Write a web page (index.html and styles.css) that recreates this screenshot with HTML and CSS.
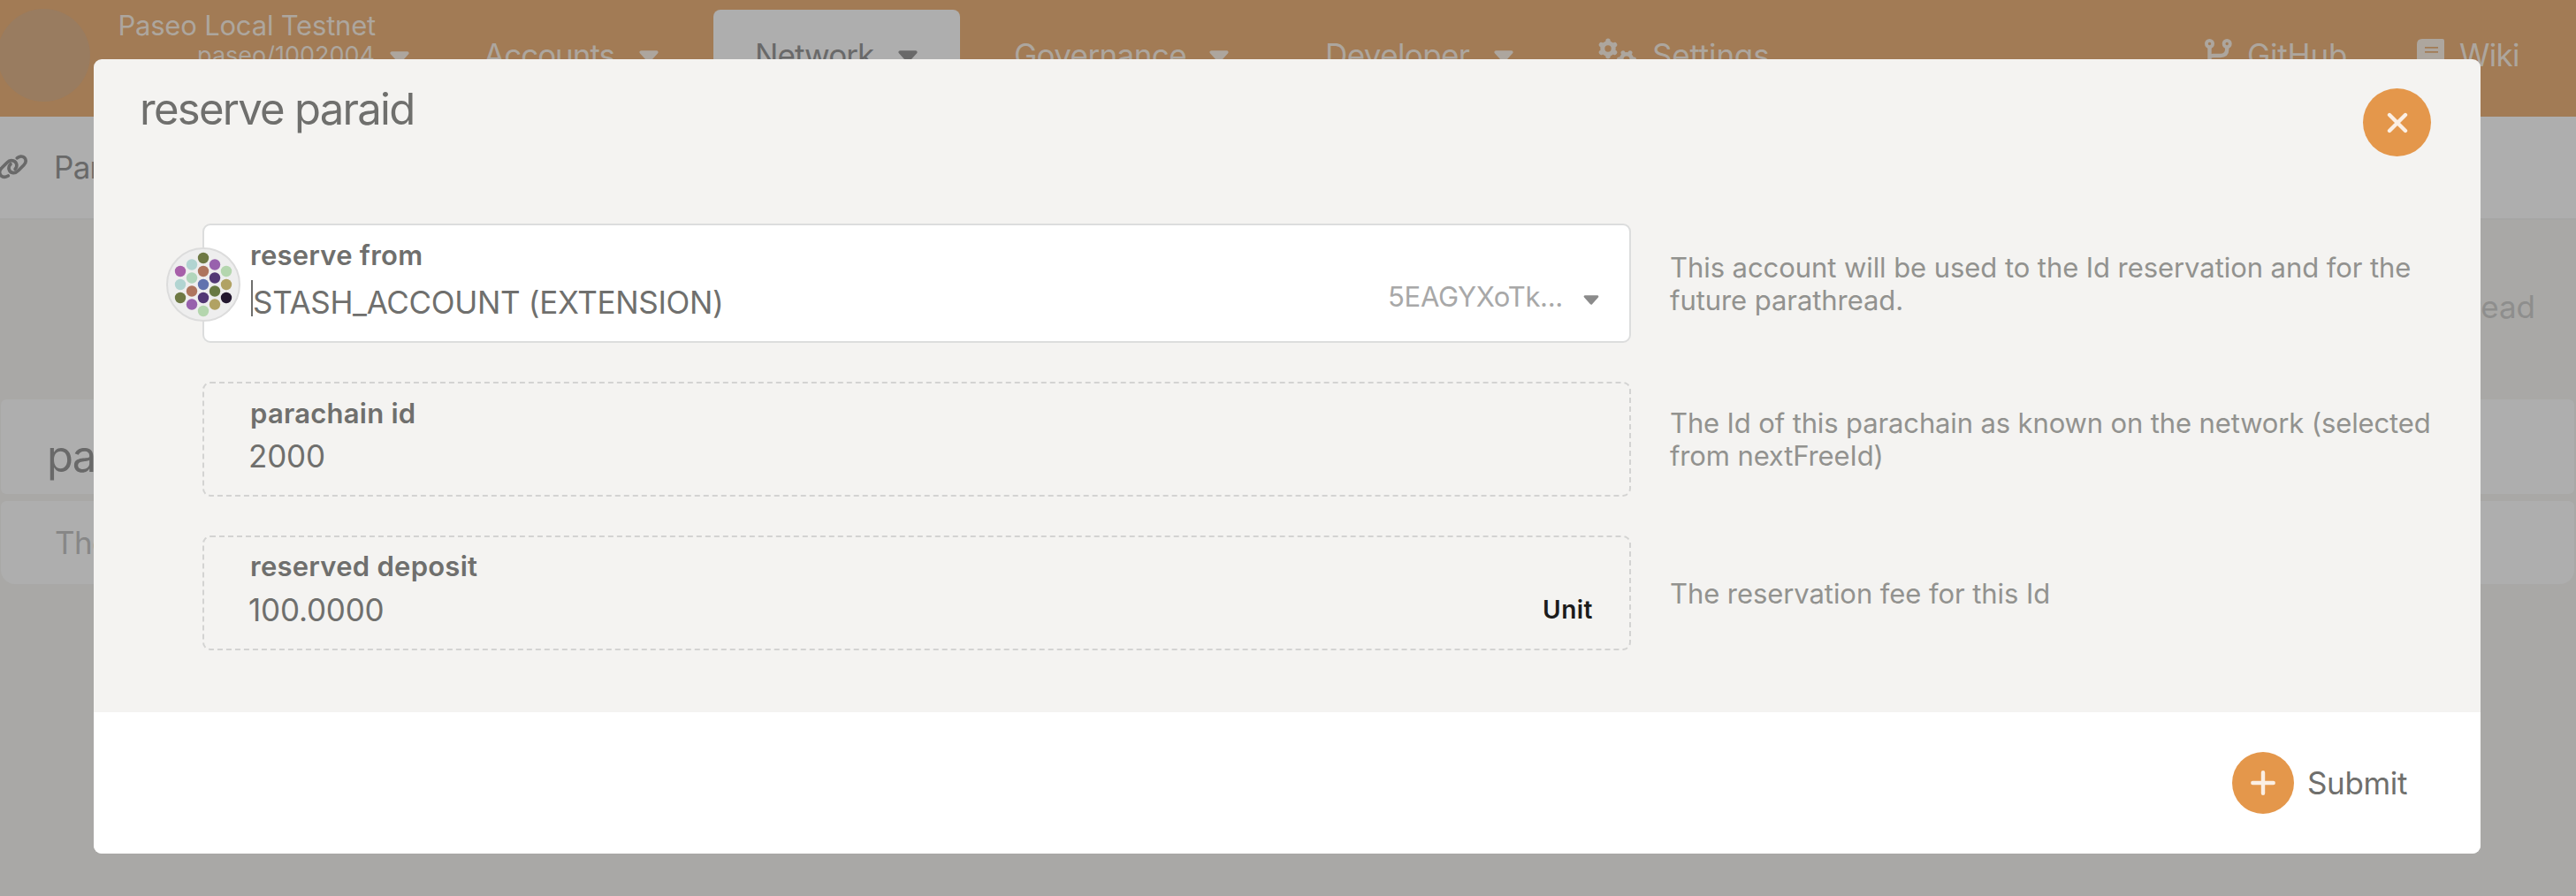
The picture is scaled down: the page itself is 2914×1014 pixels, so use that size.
FILE: index.html
```
<!DOCTYPE html>
<html lang="en">
<head>
<meta charset="utf-8">
<title>Parachains</title>
<link rel="stylesheet" href="styles.css">
</head>
<body>
<svg class="defs" width="0" height="0" aria-hidden="true">
  <symbol id="caret" viewBox="0 0 22 14"><path d="M2.2 2h17.6L11 11.8z" fill="currentColor" stroke="currentColor" stroke-width="3.6" stroke-linejoin="round"/></symbol>
</svg>

<header class="topbar">
  <div class="logo"></div>
  <div class="chain">
    <div class="chain-name">Paseo Local Testnet</div>
    <div class="chain-version">paseo/1002004</div>
  </div>
  <svg class="caret chain-caret"><use href="#caret"/></svg>
  <nav class="menu">
    <a class="menu-item accounts"><span>Accounts</span><svg class="caret"><use href="#caret"/></svg></a>
    <a class="menu-item network active"><span>Network</span><svg class="caret"><use href="#caret"/></svg></a>
    <a class="menu-item governance"><span>Governance</span><svg class="caret"><use href="#caret"/></svg></a>
    <a class="menu-item developer"><span>Developer</span><svg class="caret"><use href="#caret"/></svg></a>
    <a class="menu-link settings">
      <svg width="43" height="38" viewBox="0 0 43 38">
        <g fill="none" stroke="currentColor">
          <circle cx="11" cy="12" r="6.2" stroke-width="5"/>
          <path stroke-width="5.4" stroke-linecap="round" d="M11 3.2v1.5M11 19.300v1.500M3.400 7.600l1.300.8M17.300 15.600l1.300.8M3.400 16.400l1.300-.8M17.300 8.400l1.300-.8"/>
          <circle cx="32" cy="24" r="5.800" stroke-width="4.600"/>
          <path stroke-width="5" stroke-linecap="round" d="M24.300 24h-.8M39.700 24h.8M28 16.800l.5.900M36 16.800l-.5.900M28 31.200l.5-.9M36 31.200l-.5-.9"/>
        </g>
      </svg>
      <span>Settings</span>
    </a>
  </nav>
  <nav class="external">
    <a class="menu-link github">
      <svg width="31" height="36" viewBox="0 0 31 36" fill="none" stroke="currentColor">
        <circle cx="5.500" cy="5.500" r="3.600" stroke-width="3.800"/>
        <circle cx="25.200" cy="5.500" r="3.600" stroke-width="3.800"/>
        <circle cx="5.500" cy="30" r="3.600" stroke-width="3.800"/>
        <path stroke-width="4.400" d="M5.500 10v16M5.500 20.500q1-1.500 4-1.500h8q7.700 0 7.700-7v-2"/>
      </svg>
      <span>GitHub</span>
    </a>
    <a class="menu-link wiki">
      <svg width="31" height="36" viewBox="0 0 31 36">
        <path fill="currentColor" fill-rule="evenodd" d="M6 0h23q2 0 2 2v22q0 1.500-1.500 2v5q1.500.3 1.500 2t-2 2H6q-6 0-6-6V6q0-6 6-6zM9 9v1.700h15V9zM9 14v1.700h15V14zM6 26.500q-2.200 0-2.200 2.200T6 31h20v-4.500z"/>
      </svg>
      <span>Wiki</span>
    </a>
  </nav>
</header>

<div class="tabs">
  <svg class="link-icon" width="33" height="28" viewBox="0 0 33 28" fill="none" stroke="currentColor" stroke-width="3.700" stroke-linecap="round">
    <path d="M12.900 10.800C9.500 14 11 19.500 15 20.400c3 .7 5-.5 7-2.600l6-6c3-3 2.600-6.600.6-8.400-2.400-2.100-5.800-1.600-8.300.5"/>
    <path d="M18.200 16.300c3-3.200 1.700-8-2-9.200-3-1-5.400 0-7.200 1.900l-6 6c-3.200 3-3 6.800-.8 8.900 2.400 2.100 5.300 1.700 8 .1"/>
  </svg>
  <span class="tab">Para</span>
</div>

<main class="page">
  <div class="actions">thread</div>
  <section class="panel panel-head">para</section>
  <section class="panel panel-body">There</section>
</main>

<div class="modal" role="dialog">
  <div class="modal-header">
    <h1 class="modal-title">reserve paraid</h1>
    <button class="round close" aria-label="Close">
      <svg width="24" height="24" viewBox="0 0 24 24"><path d="M3 3l18 18M21 3L3 21" fill="none" stroke="currentColor" stroke-width="4.400" stroke-linecap="round"/></svg>
    </button>
  </div>
  <div class="form">
    <div class="row">
      <div class="field account">
        <svg class="identicon" width="84" height="84" viewBox="-42 -42 84 84">
          <circle r="41" fill="#eee" stroke="#dcdcdc" stroke-width="2"/>
          <circle cx="0" cy="-30" r="6.200" fill="#6e7944"/>
          <circle cx="-13" cy="-22.500" r="6.200" fill="#b1d4d1"/>
          <circle cx="13" cy="-22.500" r="6.200" fill="#9861ad"/>
          <circle cx="-26" cy="-15" r="6.200" fill="#a75fa9"/>
          <circle cx="0" cy="-15" r="6.200" fill="#ae755d"/>
          <circle cx="26" cy="-15" r="6.200" fill="#b4d6ae"/>
          <circle cx="-13" cy="-7.500" r="6.200" fill="#b1d5bb"/>
          <circle cx="13" cy="-7.500" r="6.200" fill="#523874"/>
          <circle cx="-26" cy="0" r="6.200" fill="#b1d4d1"/>
          <circle cx="0" cy="0" r="6.200" fill="#6172ae"/>
          <circle cx="26" cy="0" r="6.200" fill="#b1a263"/>
          <circle cx="-13" cy="7.500" r="6.200" fill="#ae755d"/>
          <circle cx="13" cy="7.500" r="6.200" fill="#687942"/>
          <circle cx="-26" cy="15" r="6.200" fill="#6e7944"/>
          <circle cx="0" cy="15" r="6.200" fill="#523874"/>
          <circle cx="26" cy="15" r="6.200" fill="#23182f"/>
          <circle cx="-13" cy="22.500" r="6.200" fill="#9861ad"/>
          <circle cx="13" cy="22.500" r="6.200" fill="#b1a263"/>
          <circle cx="0" cy="30" r="6.200" fill="#b4d6ae"/>
        </svg>
        <div class="label">reserve from</div>
        <div class="value-row">
          <span class="cursor"></span>
          <span class="value name">STASH_ACCOUNT (EXTENSION)</span>
          <span class="address">5EAGYXoTk...</span>
          <svg class="select-caret"><use href="#caret"/></svg>
        </div>
      </div>
      <p class="help account-help">This account will be used to the Id reservation and for the<br>future parathread.</p>
    </div>
    <div class="row">
      <div class="field static">
        <div class="label">parachain id</div>
        <div class="value-row"><span class="value">2000</span></div>
      </div>
      <p class="help id-help">The Id of this parachain as known on the network (selected<br>from nextFreeId)</p>
    </div>
    <div class="row">
      <div class="field static deposit">
        <div class="label">reserved deposit</div>
        <div class="value-row"><span class="value amount">100.0000</span><span class="unit">Unit</span></div>
      </div>
      <p class="help">The reservation fee for this Id</p>
    </div>
  </div>
  <div class="modal-footer">
    <button class="round submit-icon" aria-label="Submit">
      <svg width="28" height="28" viewBox="0 0 28 28"><path d="M14 2.300v23.400M2.300 14h23.400" fill="none" stroke="currentColor" stroke-width="4.400" stroke-linecap="round"/></svg>
    </button>
    <span class="submit-label">Submit</span>
  </div>
</div>
</body>
</html>
```
FILE: styles.css
```
* { box-sizing: border-box; }

body {
  margin: 0;
  width: 2914px;
  height: 1014px;
  position: relative;
  overflow: hidden;
  background: #a9a8a6;
  font-family: Inter, "Liberation Sans", sans-serif;
  font-size: 35px;
  line-height: 44px;
  color: #6f6f6d;
  white-space: nowrap;
}

svg { display: block; flex: none; }
.defs { position: absolute; }
button { border: 0; padding: 0; font: inherit; }

/* top bar */
.topbar {
  display: flex;
  height: 132px;
  background: #a27b55;
  color: #ada69e;
}

.logo {
  flex: none;
  width: 105px;
  height: 105px;
  margin: 10px 0 0 -3px;
  border-radius: 50%;
  background: #997c60;
}

.chain {
  flex: none;
  width: 323px;
  padding-top: 12px;
  text-align: right;
  line-height: 34px;
}

.chain-name { font-size: 31px; letter-spacing: -0.2px; }
.chain-version { font-size: 27px; padding-right: 1px; }

.caret { width: 22px; height: 14px; }
.chain-caret { margin: 58px 0 0 16px; }

.menu {
  display: flex;
  gap: 14px;
  height: 102px;
  margin: 11px 0 0 40px;
}

.menu-item {
  flex: none;
  display: flex;
  align-items: center;
  justify-content: space-between;
  padding: 0 48px 0 47px;
  border-radius: 8px 8px 0 0;
}

.menu-item .caret { margin-top: 4px; }
.accounts { width: 290px; padding-left: 44px; letter-spacing: -1px; }
.network { width: 279px; letter-spacing: -0.9px; }
.governance { width: 338px; letter-spacing: -0.6px; }
.developer { width: 308px; letter-spacing: -0.6px; }
.active { background: #aeaeae; color: #696969; }

.menu-link { flex: none; display: flex; align-items: center; }
.settings { gap: 18px; margin-left: 34px; letter-spacing: -0.2px; }

.external {
  display: flex;
  height: 102px;
  margin: 11px 0 0 auto;
}

.github { gap: 17px; width: 240px; letter-spacing: -0.15px; }
.wiki { gap: 17px; width: 180px; letter-spacing: -0.7px; }

/* tabs */
.tabs {
  display: flex;
  align-items: center;
  height: 117px;
  padding-bottom: 1px;
  background: #aeaeae;
  border-bottom: 2px solid #a6a6a5;
  color: #696969;
}

.link-icon { margin-left: -1px; }
.tab { margin-left: 29px; letter-spacing: -0.7px; }

/* page behind the dialog */
.actions {
  height: 203px;
  padding: 76px 46px 0 0;
  text-align: right;
  letter-spacing: 0;
  color: #8e8e8d;
}

.panel { margin: 0 2px 0 1px; background: #aeaeae; }

.panel-head {
  height: 107px;
  padding: 35px 0 0 52px;
  border-radius: 6px;
  font-size: 49px;
  line-height: 60px;
  letter-spacing: -1.7px;
  color: #696969;
}

.panel-body {
  height: 94px;
  margin-top: 8px;
  padding: 25px 0 0 61px;
  border-radius: 6px 6px 16px 16px;
  letter-spacing: -0.7px;
  color: #878787;
}

/* dialog */
.modal {
  position: absolute;
  left: 106px;
  top: 67px;
  width: 2700px;
  height: 899px;
  border-radius: 9px;
  overflow: hidden;
  background: #f4f3f1;
}

.modal-header {
  display: flex;
  justify-content: space-between;
  height: 186px;
  padding: 27px 56px 0 52px;
}

.modal-title {
  margin: 0;
  font-size: 49px;
  font-weight: 400;
  line-height: 60px;
  letter-spacing: -1.72px;
}

.round {
  flex: none;
  display: flex;
  align-items: center;
  justify-content: center;
  border-radius: 50%;
  background: #e4974b;
  color: #fbefe4;
}

.close { width: 77px; height: 77px; margin-top: 6px; }

.form {
  display: flex;
  flex-direction: column;
  gap: 44px;
  height: 553px;
  padding-left: 123px;
}

.row {
  display: grid;
  grid-template-columns: 1616px 1fr;
  column-gap: 44px;
  align-items: center;
}

.field {
  position: relative;
  height: 130px;
  padding: 16px 34px 0 51px;
  border: 2px solid #dcdddd;
  border-radius: 9px;
}

.account { height: 135px; background: #fff; }
.static { border: 2px dashed #d3d3d2; }
.deposit { padding-top: 15px; }
.identicon { position: absolute; left: -43px; top: 25px; }

.label {
  padding-left: 1px;
  font-size: 31px;
  font-weight: 600;
  line-height: 36px;
  letter-spacing: 0.25px;
}

.value-row { display: flex; align-items: flex-start; margin-top: 8px; }
.account .value-row { margin-top: 13px; }
.deposit .value-row { margin-top: 9px; }
.cursor { flex: none; width: 2px; height: 41px; margin: -3px 0 0 2px; background: #6f6f6d; }
.value { margin-left: -1px; letter-spacing: -0.2px; }
.name { margin-left: 0; letter-spacing: -0.32px; }

.address {
  margin: -6px 23px 0 auto;
  font-size: 31px;
  letter-spacing: -0.3px;
  color: #a8a8a8;
}

.select-caret { width: 18px; height: 11px; margin-top: 14px; color: #8b8b8b; }

.unit {
  margin: 0 7px 0 auto;
  font-size: 28px;
  font-weight: 600;
  letter-spacing: 0.5px;
  color: #1c1c1c;
}

.help {
  margin: 0;
  font-size: 31px;
  line-height: 37px;
  letter-spacing: -0.07px;
  color: #92928f;
}

.id-help { letter-spacing: -0.13px; }

.modal-footer {
  display: flex;
  align-items: center;
  height: 160px;
  padding-left: 2419px;
  background: #fff;
}

.submit-icon { width: 70px; height: 70px; }
.submit-label { margin-left: 15px; letter-spacing: -0.35px; }
```
